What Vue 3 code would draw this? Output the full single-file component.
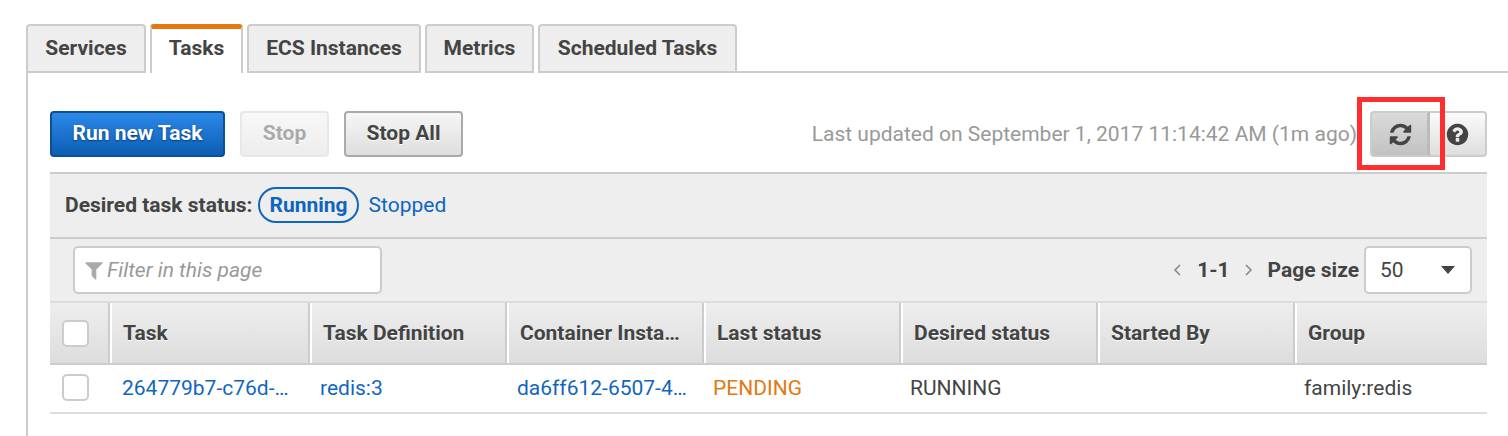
<template>
  <div class="page">
    <nav class="tabs">
      <a v-for="tab in tabs" :key="tab" class="tab" :class="{ active: tab === 'Tasks' }">{{ tab }}</a>
      <div class="tab-rest"></div>
    </nav>

    <main class="panel">
      <div class="toolbar">
        <button class="btn primary run">Run new Task</button>
        <button class="btn disabled stop">Stop</button>
        <button class="btn stop-all">Stop All</button>
        <span class="updated">Last updated on September 1, 2017 11:14:42 AM (1m ago)</span>
        <div class="icon-btns">
          <button class="icon-btn refresh">
            <svg viewBox="0 0 1792 1792" width="25" height="25"><path fill="#444" :d="refreshPath" /></svg>
          </button>
          <button class="icon-btn help">
            <svg viewBox="0 0 1792 1792" width="25" height="25"><path fill="#444" :d="helpPath" /></svg>
          </button>
          <div class="highlight"></div>
        </div>
      </div>

      <section class="grid-box">
        <div class="status-bar">
          <span class="status-label">Desired task status:</span>
          <span class="pill">Running</span>
          <a class="link stopped">Stopped</a>
        </div>

        <div class="filter-bar">
          <div class="filter">
            <svg viewBox="0 0 1792 1792" width="22" height="22"><path fill="#aaa" :d="filterPath" /></svg>
            <span>Filter in this page</span>
          </div>
          <div class="pager">
            <svg class="chev" viewBox="0 0 10 14" width="10" height="14"><path d="M8 2 3 7l5 5" /></svg>
            <span class="range">1-1</span>
            <svg class="chev" viewBox="0 0 10 14" width="10" height="14"><path d="m2 2 5 5-5 5" /></svg>
            <span class="size-label">Page size</span>
            <div class="size-select">
              <span>50</span>
              <i class="caret"></i>
            </div>
          </div>
        </div>

        <div class="thead cols">
          <div class="th check-cell"><i class="checkbox"></i></div>
          <div v-for="col in columns" :key="col" class="th">{{ col }}</div>
        </div>

        <div class="trow cols">
          <div class="td check-cell"><i class="checkbox"></i></div>
          <div class="td first"><a class="link">264779b7-c76d-…</a></div>
          <div class="td"><a class="link">redis:3</a></div>
          <div class="td"><a class="link">da6ff612-6507-4…</a></div>
          <div class="td pending">PENDING</div>
          <div class="td">RUNNING</div>
          <div class="td"></div>
          <div class="td">family:redis</div>
        </div>
      </section>
    </main>
  </div>
</template>

<script setup>
const tabs = ['Services', 'Tasks', 'ECS Instances', 'Metrics', 'Scheduled Tasks']
const columns = ['Task', 'Task Definition', 'Container Insta…', 'Last status', 'Desired status', 'Started By', 'Group']

const refreshPath = 'M1639 1056q0 5-1 7-64 268-268 434.5t-478 166.5q-146 0-282.5-55t-243.5-157l-129 129q-19 19-45 19t-45-19-19-45v-448q0-26 19-45t45-19h448q26 0 45 19t19 45-19 45l-137 137q71 66 161 102t187 36q134 0 250-65t186-179q11-17 53-117 8-23 30-23h192q13 0 22.5 9.5t9.5 22.5zm25-800v448q0 26-19 45t-45 19h-448q-26 0-45-19t-19-45 19-45l138-138q-148-137-349-137-134 0-250 65t-186 179q-11 17-53 117-8 23-30 23h-199q-13 0-22.5-9.5t-9.5-22.5v-7q65-268 270-434.5t480-166.5q146 0 284 55.5t245 156.5l130-129q19-19 45-19t45 19 19 45z'
const helpPath = 'M1024 1376v-192q0-14-9-23t-23-9h-192q-14 0-23 9t-9 23v192q0 14 9 23t23 9h192q14 0 23-9t9-23zm256-672q0-88-55.5-163t-138.5-116-170-41q-243 0-371 213-15 24 8 42l132 100q7 6 19 6 16 0 25-12 53-68 86-92 34-24 86-24 48 0 85.5 26t37.5 59q0 38-20 61t-68 45q-63 28-115.5 86.5t-52.5 125.5v36q0 14 9 23t23 9h192q14 0 23-9t9-23q0-19 21.5-49.5t54.5-49.5q32-18 49-28.5t46-35 44.5-48 28-60.5 12.5-81zm384 192q0 209-103 385.5t-279.5 279.5-385.5 103-385.5-103-279.5-279.5-103-385.5 103-385.5 279.5-279.5 385.5-103 385.5 103 279.5 279.5 103 385.5z'
const filterPath = 'M1595 295q17 41-14 70l-493 493v742q0 42-39 59-13 5-25 5-27 0-45-19l-256-256q-19-19-19-45v-486l-493-493q-31-29-14-70 17-39 59-39h1280q42 0 59 39z'
</script>

<style>
html, body {
  margin: 0;
  background: #fff;
}
</style>

<style scoped>
.page {
  width: 1508px;
  height: 436px;
  box-sizing: border-box;
  padding: 24px 0 0 26px;
  overflow: hidden;
  font-family: Roboto, "Liberation Sans", sans-serif;
  font-size: 21px;
  color: #444;
}

.tabs {
  display: flex;
  height: 49px;
  gap: 4px;
}

.tab {
  box-sizing: border-box;
  height: 49px;
  padding-top: 10px;
  border: 2px solid #ccc;
  border-radius: 4px 4px 0 0;
  background: #eee;
  font-weight: 700;
  line-height: 24px;
  text-align: center;
}

.tab:nth-child(1) { width: 120px; }
.tab:nth-child(2) { width: 93px; }
.tab:nth-child(3) { width: 174px; }
.tab:nth-child(4) { width: 109px; }
.tab:nth-child(5) { width: 199px; }

.tab.active {
  background: #fff;
  border-top: 5px solid #e47911;
  border-bottom: 0;
  padding-top: 7px;
}

.tab-rest {
  flex: 1;
  margin-left: -4px;
  height: 49px;
  border-bottom: 2px solid #ccc;
  box-sizing: border-box;
}

.panel {
  height: 400px;
  border-left: 2px solid #ccc;
  padding: 38px 21px 0 22px;
}

.toolbar {
  display: flex;
  align-items: center;
  height: 46px;
  margin-bottom: 15px;
}

.btn {
  box-sizing: border-box;
  height: 46px;
  padding: 0 0 2px;
  border-radius: 4px;
  border: 2px solid #aaa;
  font-family: inherit;
  font-size: 21px;
  font-weight: 700;
  color: #444;
  background: linear-gradient(#f6f6f6, #dedede);
  text-shadow: 0 1px 0 #fff;
}

.run {
  width: 175px;
  color: #fff;
  border-color: #0b4f96;
  background: linear-gradient(#2c88e8, #0d5eb3);
  text-shadow: 0 1px 2px #063c75;
}

.stop {
  width: 89px;
  margin-left: 15px;
  color: #aaa;
  border-color: #e8e8e8;
  background: linear-gradient(#f8f8f8, #ededed);
}

.stop-all {
  width: 119px;
  margin-left: 15px;
}

.updated {
  margin-left: auto;
  margin-right: 13px;
  color: #999;
}

.icon-btns {
  position: relative;
  display: flex;
}

.icon-btn {
  box-sizing: border-box;
  display: flex;
  align-items: center;
  justify-content: center;
  height: 46px;
  padding: 0;
  border: 2px solid #ccc;
}

.refresh {
  width: 60px;
  padding-left: 2px;
  border-radius: 4px 0 0 4px;
  border-right: 3px solid #bbb;
  background: linear-gradient(#dadada, #c2c2c2);
}

.help {
  width: 57px;
  border-left: 0;
  border-radius: 0 4px 4px 0;
  background: linear-gradient(#fbfbfb, #dedede);
}

.highlight {
  position: absolute;
  left: -13px;
  top: -14px;
  width: 88px;
  height: 73px;
  box-sizing: border-box;
  border: 5px solid #ff2e2e;
  pointer-events: none;
}

.grid-box {
  border-top: 2px solid #ccc;
}

.status-bar {
  display: flex;
  align-items: center;
  box-sizing: border-box;
  height: 65px;
  padding: 0 0 2px 15px;
  background: #eee;
  border-bottom: 2px solid #ccc;
}

.status-label {
  font-weight: 700;
}

.pill {
  box-sizing: border-box;
  height: 36px;
  margin-left: 6px;
  padding: 0 9px;
  line-height: 32px;
  border: 2px solid #0f66bf;
  border-radius: 18px;
  color: #0f66bf;
  font-weight: 700;
}

.link {
  color: #0f66bf;
}

.stopped {
  margin-left: 10px;
}

.filter-bar {
  display: flex;
  align-items: center;
  justify-content: space-between;
  box-sizing: border-box;
  height: 64px;
  padding: 0 15px 0 23px;
  background: #eee;
  border-bottom: 2px solid #ddd;
}

.filter {
  box-sizing: border-box;
  display: flex;
  align-items: center;
  gap: 2px;
  width: 309px;
  height: 48px;
  padding-left: 8px;
  background: #fff;
  border: 2px solid #ccc;
  border-radius: 5px;
  color: #999;
  font-style: italic;
}

.pager {
  display: flex;
  align-items: center;
}

.chev {
  fill: none;
  stroke: #888;
  stroke-width: 1.6;
}

.range {
  margin: 0 14px 0 15px;
  font-weight: 700;
}

.size-label {
  margin-left: 14px;
  margin-right: 5px;
  font-weight: 700;
}

.size-select {
  box-sizing: border-box;
  display: flex;
  align-items: center;
  justify-content: space-between;
  width: 108px;
  height: 48px;
  padding: 0 15px 0 14px;
  background: #fff;
  border: 2px solid #ccc;
  border-radius: 5px;
}

.caret {
  width: 0;
  height: 0;
  border-left: 7px solid transparent;
  border-right: 7px solid transparent;
  border-top: 8px solid #444;
}

.cols {
  display: grid;
  grid-template-columns: 60px 200px 197px 197px 197px 197px 197px 193px;
}

.thead {
  box-sizing: border-box;
  height: 62px;
  background: linear-gradient(#eee, #ddd);
  border-bottom: 2px solid #ccc;
}

.th {
  display: flex;
  align-items: center;
  padding-left: 13px;
  border-right: 2px solid #ccc;
  box-shadow: inset 2px 0 0 #fff;
  font-weight: 700;
  text-shadow: 0 1px 0 #fff;
  white-space: nowrap;
}

.th:last-child {
  border-right: 0;
}

.th.check-cell {
  box-shadow: none;
  padding-left: 12px;
}

.checkbox {
  box-sizing: border-box;
  display: block;
  width: 27px;
  height: 27px;
  background: #fff;
  border: 2px solid #ccc;
  border-radius: 5px;
}

.trow {
  box-sizing: border-box;
  height: 49px;
  border-bottom: 2px solid #ddd;
}

.td {
  display: flex;
  align-items: center;
  padding: 0 0 2px 9px;
  white-space: nowrap;
}

.td:nth-child(3),
.td:nth-child(4) {
  padding-left: 10px;
}

.td.first,
.td.check-cell {
  padding-left: 12px;
}

.pending {
  color: #e47911;
}
</style>
